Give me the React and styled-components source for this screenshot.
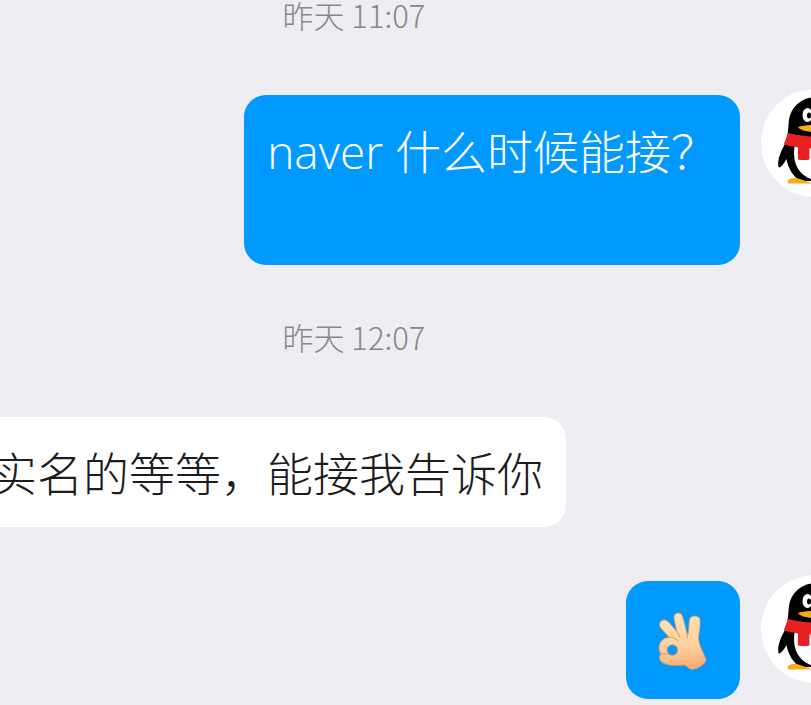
import React from "react";
import styled, { createGlobalStyle } from "styled-components";

const GlobalStyle = createGlobalStyle`
  body {
    margin: 0;
    background: #eeedf2;
    font-family: "Open Sans", "Noto Sans CJK SC", sans-serif;
    font-weight: 300;
  }
`;

const Chat = styled.main`
  display: flex;
  flex-direction: column;
  min-height: 100vh;
  overflow: hidden;
`;

const Timestamp = styled.time`
  display: block;
  margin-right: 103px;
  text-align: center;
  font-family: "Noto Sans CJK SC", sans-serif;
  font-size: 31px;
  line-height: 30px;
  color: #88878c;
`;

const MessageRow = styled.article`
  display: flex;
  align-items: flex-start;
  gap: 21px;
  justify-content: ${(p) => (p.$own ? "flex-end" : "flex-start")};
  margin: ${(p) => (p.$own ? "0 -58px 0 0" : "0 0 0 -32px")};
  padding: ${(p) => p.$space};
`;

const Bubble = styled.div`
  flex: none;
  margin-top: 6px;
  padding: 26px 23px 24px;
  border-radius: 22px;
  background: ${(p) => (p.$own ? "#0099ff" : "#ffffff")};
  color: ${(p) => (p.$own ? "#ffffff" : "#1c1c1c")};
`;

const Text = styled.p`
  margin: 0;
  font-size: 46px;
  line-height: 60px;
  white-space: pre;
`;

const AvatarFrame = styled.svg`
  display: block;
  flex: none;
  width: 108px;
  height: 108px;
  border-radius: 50%;
  background: #ffffff;
`;

const EmojiImage = styled.svg`
  display: block;
  width: 68px;
  height: 68px;
`;

function Avatar() {
  return (
    <AvatarFrame viewBox="0 0 108 108" role="img" aria-label="QQ">
      <path
        d="M57 8C38 8 28 20 27.500 36L26.500 46L24 55C20 62 16.500 70 17.300 77C18 81 22 76 25.500 70C27 79 32 88 40 92H74C82 88 87 79 88.500 70C92 76 96 81 96.700 77C97.500 70 94 62 90 55L87.500 46L86.500 36C86 20 76 8 57 8Z"
        fill="#000"
      />
      <path
        d="M26.500 93C27 89 34 88 39 90L52 94.500H29Q26.500 94.500 26.500 93ZM87.500 93C87 89 80 88 75 90L62 94.500H85Q87.500 94.500 87.500 93Z"
        fill="#f5ad13"
      />
      <path d="M34 55C31 70 34 88 57 92C80 88 83 70 80 55Z" fill="#fff" />
      <path
        d="M27 44C45 49 69 49 87 44L91 55C70 61 44 61 22.700 55.500Z"
        fill="#e82022"
      />
      <path d="M37 56L48.500 58V70.500Q43 71.500 37 70.500Z" fill="#e82022" />
      <ellipse cx="46.500" cy="26" rx="5" ry="7" fill="#fff" />
      <ellipse cx="67.500" cy="26" rx="5" ry="7" fill="#fff" />
      <ellipse cx="48" cy="26.500" rx="2" ry="3" fill="#000" />
      <ellipse cx="66" cy="26.500" rx="2" ry="3" fill="#000" />
      <path
        d="M37 38C45 35 69 35 77 38C73 45 41 45 37 38Z"
        fill="#f5ad13"
      />
    </AvatarFrame>
  );
}

function OkHand() {
  return (
    <EmojiImage viewBox="27 21 204 204" role="img" aria-label="OK">
      <defs>
        <linearGradient
          id="skin"
          gradientUnits="userSpaceOnUse"
          x1="110"
          y1="40"
          x2="130"
          y2="207"
        >
          <stop offset="0" stopColor="#ffe3b5" />
          <stop offset="0.600" stopColor="#ffd0a0" />
          <stop offset="1" stopColor="#f9aa70" />
        </linearGradient>
      </defs>
      <path
        fill="url(#skin)"
        stroke="#d9975c"
        strokeWidth="2.500"
        strokeLinejoin="round"
        fillRule="evenodd"
        d="M88 112C79 102 68 92 61 82C54 71 64 55 78 61C88 66 99 82 110 94C108 78 102 62 102 51C103 36 122 35 127 48C133 64 136 82 141 101L145 101C147 86 146 70 149 57C152 45 176 45 180 58C182 75 177 98 175 115C178 140 192 160 198 178C200 188 178 206 158 208C146 209 143 199 134 195C111 197 80 199 64 185C57 178 57 169 63 162C56 152 55 137 62 126C68 117 78 113 88 112ZM97 134A16 16 0 1 0 97 166A16 16 0 1 0 97 134Z"
      />
      <path
        d="M88 112C97 111 106 115 114 122M110 94L120 112M141 101L142 115M63 162Q71 158 82 163"
        fill="none"
        stroke="#d9975c"
        strokeWidth="3"
        strokeLinecap="round"
      />
    </EmojiImage>
  );
}

export default function App() {
  return (
    <>
      <GlobalStyle />
      <Chat>
        <Timestamp>昨天 11:07</Timestamp>
        <MessageRow $own $space="59px 0 57px">
          <Bubble $own>
            <Text>{"naver 什么时候能接？\n\n"}</Text>
          </Bubble>
          <Avatar />
        </MessageRow>
        <Timestamp>昨天 12:07</Timestamp>
        <MessageRow $space="59px 0 0">
          <Bubble>
            <Text>实名的等等，能接我告诉你</Text>
          </Bubble>
        </MessageRow>
        <MessageRow $own $space="48px 0 0">
          <Bubble $own>
            <OkHand />
          </Bubble>
          <Avatar />
        </MessageRow>
      </Chat>
    </>
  );
}
